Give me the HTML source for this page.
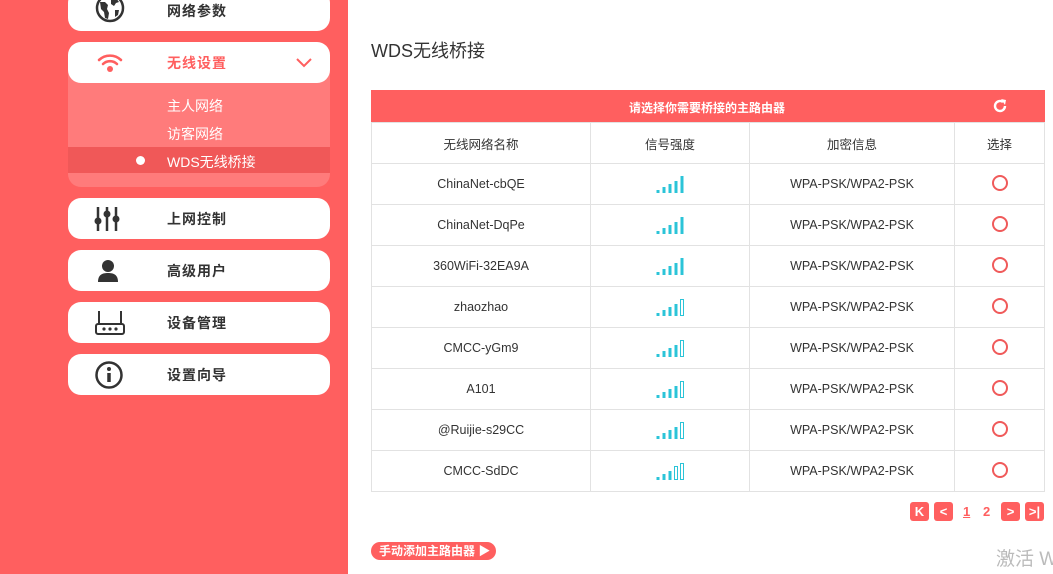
<!DOCTYPE html>
<html><head><meta charset="utf-8"><style>
body{margin:0;width:1053px;height:574px;overflow:hidden;background:#fff;font-family:"Liberation Sans","Noto Sans CJK SC",sans-serif;position:relative}
.side{position:absolute;left:0;top:0;width:348px;height:574px;background:#ff5f5f}
.item{position:absolute;left:68px;width:262px;height:41px;background:#fff;border-radius:13px;font-size:14px;color:#333;font-weight:bold}
.item .t{position:absolute;left:99px;top:11px;letter-spacing:1px}
.item svg{position:absolute;left:26px;top:8px}
.sub{position:absolute;left:68px;top:70px;width:262px;height:117px;background:#ff7b7b;border-radius:0 0 13px 13px}
.sub div{position:absolute;left:99px;color:#fff;font-size:14px}
table{position:absolute;left:371px;top:122px;width:674px;border-collapse:collapse;font-size:12.5px;color:#333}
td{border:1px solid #e2e2e2;height:40px;text-align:center;padding:0}
.hb{position:absolute;left:371px;top:90px;width:674px;height:32px;background:#ff5f5f;color:#fff;font-size:12px;font-weight:bold}
.pb{position:absolute;top:502px;width:19px;height:19px;background:#ff5f5f;border-radius:3px;color:#fff;font-size:13px;text-align:center;line-height:19px;font-weight:bold}
.rad{display:inline-block;width:12px;height:12px;border:2px solid #f05a5a;border-radius:50%}
</style></head><body>
<div class="side"></div>
<div class="item" style="top:-10px"><svg width="32" height="32" viewBox="0 0 32 32" style="top:2px"><circle cx="16" cy="16" r="13" fill="none" stroke="#333" stroke-width="2.5"/><path d="M6 10l5 0 3 3-1 4 2 4-1 6-3-1-1-6-3-3zM17 5l5 1 3 4-3 1-2 3-3-2zM21 18l4 0-1 5-3 2z" fill="#333"/></svg><span class="t">网络参数</span></div>
<div class="sub">
<div style="top:26px">主人网络</div>
<div style="top:54px">访客网络</div>
<div style="left:0;top:77px;width:262px;height:26px;background:#f05858"></div>
<div style="left:68px;top:86px;width:9px;height:9px;border-radius:50%;background:#fff"></div>
<div style="top:82px">WDS无线桥接</div>
</div>
<div class="item" style="top:42px;color:#ff5f5f"><svg width="32" height="26" viewBox="0 0 32 26"><path d="M5 10a16 16 0 0 1 22 0M9 14a10 10 0 0 1 14 0" fill="none" stroke="#ff5f5f" stroke-width="2.6" stroke-linecap="round"/><circle cx="16" cy="19" r="3" fill="#ff5f5f"/></svg><span class="t">无线设置</span><svg width="16" height="10" viewBox="0 0 16 10" style="left:228px;top:16px"><path d="M1 1l7 7 7-7" fill="none" stroke="#ff5f5f" stroke-width="2"/></svg></div>
<div class="item" style="top:198px"><svg width="28" height="26" viewBox="0 0 28 26"><path d="M4 1v24M13 1v24M22 1v24" stroke="#333" stroke-width="2.5"/><circle cx="4" cy="15" r="3.5" fill="#333"/><circle cx="13" cy="8" r="3.5" fill="#333"/><circle cx="22" cy="13" r="3.5" fill="#333"/></svg><span class="t">上网控制</span></div>
<div class="item" style="top:250px"><svg width="28" height="26" viewBox="0 0 28 26"><circle cx="14" cy="8" r="6" fill="#333"/><path d="M4 24c0-7 4-9 10-9s10 2 10 9z" fill="#333"/></svg><span class="t">高级用户</span></div>
<div class="item" style="top:302px"><svg width="32" height="28" viewBox="0 0 32 28"><path d="M5 1v13M27 1v13" stroke="#333" stroke-width="2"/><rect x="2" y="14" width="28" height="10" rx="2" fill="none" stroke="#333" stroke-width="2"/><circle cx="10" cy="19" r="1.6" fill="#333"/><circle cx="16" cy="19" r="1.6" fill="#333"/><circle cx="22" cy="19" r="1.6" fill="#333"/></svg><span class="t">设备管理</span></div>
<div class="item" style="top:354px"><svg width="30" height="30" viewBox="0 0 30 30" style="top:6px"><circle cx="15" cy="15" r="12.5" fill="none" stroke="#333" stroke-width="2.5"/><circle cx="15" cy="9" r="2" fill="#333"/><path d="M15 13v9" stroke="#333" stroke-width="3.5"/></svg><span class="t">设置向导</span></div>

<div style="position:absolute;left:371px;top:37px;font-size:18px;color:#333">WDS无线桥接</div>
<div class="hb"><span style="position:absolute;left:258px;top:9px">请选择你需要桥接的主路由器</span><svg width="16" height="16" viewBox="0 0 16 16" style="position:absolute;left:621px;top:8px"><path d="M13 8a5 5 0 1 1-2-4" fill="none" stroke="#fff" stroke-width="2.4"/><path d="M9 1l5 1-1 5z" fill="#fff"/></svg></div>
<table>
<tr><td style="width:218px">无线网络名称</td><td style="width:158px">信号强度</td><td style="width:204px">加密信息</td><td>选择</td></tr>
<tr><td>ChinaNet-cbQE</td><td><svg width="28" height="20"><path d="M2 20v-3M8 20v-6M14 20v-9M20 20v-12M26 20v-17" stroke="#2bc4d8" stroke-width="3"/></svg></td><td>WPA-PSK/WPA2-PSK</td><td><span class="rad"></span></td></tr>
<tr><td>ChinaNet-DqPe</td><td><svg width="28" height="20"><path d="M2 20v-3M8 20v-6M14 20v-9M20 20v-12M26 20v-17" stroke="#2bc4d8" stroke-width="3"/></svg></td><td>WPA-PSK/WPA2-PSK</td><td><span class="rad"></span></td></tr>
<tr><td>360WiFi-32EA9A</td><td><svg width="28" height="20"><path d="M2 20v-3M8 20v-6M14 20v-9M20 20v-12M26 20v-17" stroke="#2bc4d8" stroke-width="3"/></svg></td><td>WPA-PSK/WPA2-PSK</td><td><span class="rad"></span></td></tr>
<tr><td>zhaozhao</td><td><svg width="28" height="20"><path d="M2 20v-3M8 20v-6M14 20v-9M20 20v-12" stroke="#2bc4d8" stroke-width="3"/><rect x="24.5" y="3.5" width="3" height="16" fill="none" stroke="#2bc4d8"/></svg></td><td>WPA-PSK/WPA2-PSK</td><td><span class="rad"></span></td></tr>
<tr><td>CMCC-yGm9</td><td><svg width="28" height="20"><path d="M2 20v-3M8 20v-6M14 20v-9M20 20v-12" stroke="#2bc4d8" stroke-width="3"/><rect x="24.5" y="3.5" width="3" height="16" fill="none" stroke="#2bc4d8"/></svg></td><td>WPA-PSK/WPA2-PSK</td><td><span class="rad"></span></td></tr>
<tr><td>A101</td><td><svg width="28" height="20"><path d="M2 20v-3M8 20v-6M14 20v-9M20 20v-12" stroke="#2bc4d8" stroke-width="3"/><rect x="24.5" y="3.5" width="3" height="16" fill="none" stroke="#2bc4d8"/></svg></td><td>WPA-PSK/WPA2-PSK</td><td><span class="rad"></span></td></tr>
<tr><td>@Ruijie-s29CC</td><td><svg width="28" height="20"><path d="M2 20v-3M8 20v-6M14 20v-9M20 20v-12" stroke="#2bc4d8" stroke-width="3"/><rect x="24.5" y="3.5" width="3" height="16" fill="none" stroke="#2bc4d8"/></svg></td><td>WPA-PSK/WPA2-PSK</td><td><span class="rad"></span></td></tr>
<tr><td>CMCC-SdDC</td><td><svg width="28" height="20"><path d="M2 20v-3M8 20v-6M14 20v-9" stroke="#2bc4d8" stroke-width="3"/><rect x="18.5" y="6.5" width="3" height="13" fill="none" stroke="#2bc4d8"/><rect x="24.5" y="3.5" width="3" height="16" fill="none" stroke="#2bc4d8"/></svg></td><td>WPA-PSK/WPA2-PSK</td><td><span class="rad"></span></td></tr>
</table>
<div class="pb" style="left:910px">K</div><div class="pb" style="left:934px">&lt;</div>
<div style="position:absolute;left:963px;top:504px;font-size:13px;color:#ff5f5f;font-weight:bold;text-decoration:underline">1</div>
<div style="position:absolute;left:983px;top:504px;font-size:13px;color:#ff5f5f;font-weight:bold">2</div>
<div class="pb" style="left:1001px">&gt;</div><div class="pb" style="left:1025px">&gt;|</div>
<div style="position:absolute;left:371px;top:542px;width:125px;height:18px;border-radius:9px;background:#ff5f5f;color:#fff;font-size:12px;font-weight:bold;line-height:18px;text-indent:8px">手动添加主路由器 ▶</div>
<div style="position:absolute;left:996px;top:544px;font-size:19px;color:#bbb;white-space:nowrap">激活 W</div>
</body></html>
